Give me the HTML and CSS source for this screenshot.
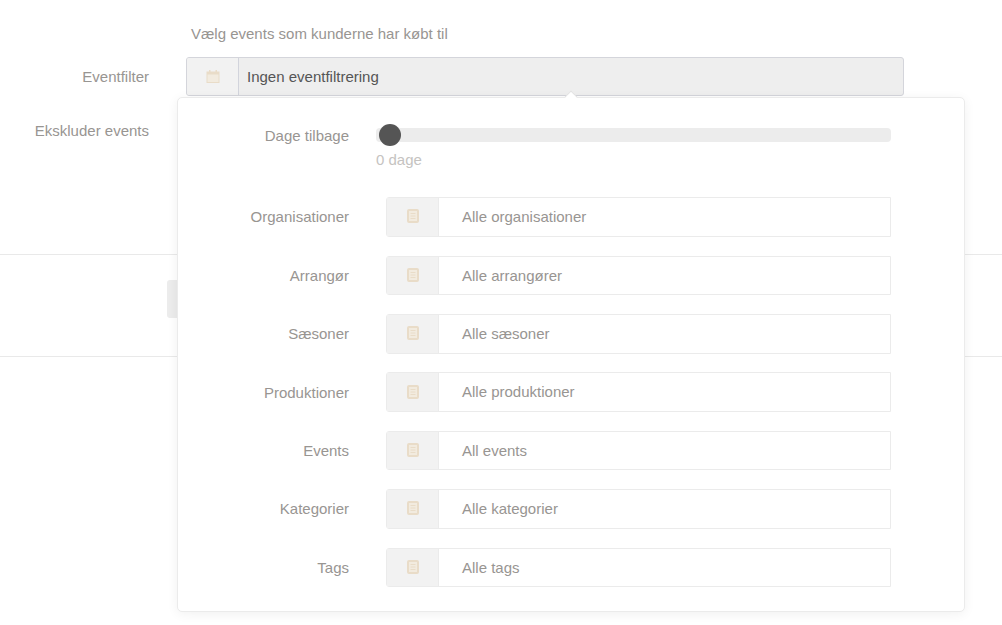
FILE: index.html
```html
<!DOCTYPE html>
<html lang="da">
<head>
<meta charset="utf-8">
<title>Eventfilter</title>
<link rel="stylesheet" href="styles.css">
</head>
<body>
<main class="page">
  <section class="form">
    <p class="hint">Vælg events som kunderne har købt til</p>
    <div class="form-row">
      <span class="form-label">Eventfilter</span>
      <div class="picker">
        <span class="picker-addon">
          <svg class="icon" width="14" height="13" viewBox="0 0 14 13"><path d="M3 0h1.500v1.500h5V0H11v1.500h2.500V13H.5V1.500H3z" fill="#e9dcc8"/><rect x="1.500" y="4.500" width="11" height="7.500" fill="#f2ebdf"/></svg>
        </span>
        <span class="picker-value">Ingen eventfiltrering</span>
      </div>
    </div>
    <div class="form-row form-row-plain">
      <span class="form-label">Ekskluder events</span>
    </div>
  </section>
  <section class="actions"><span class="action-button"></span></section>

  <div class="popover">
    <span class="popover-arrow"></span>
    <div class="slider-row">
      <span class="field-label">Dage tilbage</span>
      <div class="slider">
        <div class="slider-track"><span class="slider-thumb"></span></div>
        <span class="slider-value">0 dage</span>
      </div>
    </div>
    <div class="fields">
      <div class="field"><span class="field-label">Organisationer</span><div class="select"><span class="select-addon"><svg class="icon" width="12" height="14" viewBox="0 0 12 14"><use href="#doc"/></svg></span><span class="select-text">Alle organisationer</span></div></div>
      <div class="field"><span class="field-label">Arrangør</span><div class="select"><span class="select-addon"><svg class="icon" width="12" height="14" viewBox="0 0 12 14"><use href="#doc"/></svg></span><span class="select-text">Alle arrangører</span></div></div>
      <div class="field"><span class="field-label">Sæsoner</span><div class="select"><span class="select-addon"><svg class="icon" width="12" height="14" viewBox="0 0 12 14"><use href="#doc"/></svg></span><span class="select-text">Alle sæsoner</span></div></div>
      <div class="field"><span class="field-label">Produktioner</span><div class="select"><span class="select-addon"><svg class="icon" width="12" height="14" viewBox="0 0 12 14"><use href="#doc"/></svg></span><span class="select-text">Alle produktioner</span></div></div>
      <div class="field"><span class="field-label">Events</span><div class="select"><span class="select-addon"><svg class="icon" width="12" height="14" viewBox="0 0 12 14"><use href="#doc"/></svg></span><span class="select-text">All events</span></div></div>
      <div class="field"><span class="field-label">Kategorier</span><div class="select"><span class="select-addon"><svg class="icon" width="12" height="14" viewBox="0 0 12 14"><use href="#doc"/></svg></span><span class="select-text">Alle kategorier</span></div></div>
      <div class="field"><span class="field-label">Tags</span><div class="select"><span class="select-addon"><svg class="icon" width="12" height="14" viewBox="0 0 12 14"><use href="#doc"/></svg></span><span class="select-text">Alle tags</span></div></div>
    </div>
  </div>
</main>
<svg class="defs" width="0" height="0" aria-hidden="true">
  <symbol id="doc" viewBox="0 0 12 14"><rect x="1" y="1" width="10" height="12" rx="1" fill="#f2ebdf" stroke="#e9dcc8" stroke-width="2"/><path d="M3.500 4.500h5M3.500 7h5M3.500 9.500h5" stroke="#e9dcc8" stroke-width="1"/></symbol>
</svg>
</body>
</html>
```
FILE: styles.css
```css
* { box-sizing: border-box; }
html, body { margin: 0; height: 100%; overflow: hidden; background: #fff; }
body { font-family: "Liberation Sans", Arial, sans-serif; font-size: 15px; color: #989592; }
.page { position: relative; width: 1002px; height: 625px; overflow: hidden; }

.form { height: 255px; padding-top: 25px; border-bottom: 1px solid #e9e9e9; }
.hint { margin: 0 0 15px 191px; height: 17px; line-height: 17px; }
.form-row { display: flex; align-items: center; }
.form-row-plain { margin-top: 14px; height: 40px; align-items: flex-start; padding-top: 12px; }
.form-label { width: 149px; text-align: right; line-height: 17px; flex: none; }
.picker { display: flex; width: 718px; height: 39px; margin-left: 37px; background: #eee; border: 1px solid #d4d5db; border-radius: 3px; overflow: hidden; }
.picker-addon { display: flex; width: 52px; align-items: center; justify-content: center; background: #f2f2f2; border-right: 1px solid #d2d4dc; flex: none; }
.picker-value { padding-left: 8px; line-height: 37px; color: #555; }

.actions { height: 102px; padding: 25px 0 0 167px; border-bottom: 1px solid #e9e9e9; }
.action-button { display: block; width: 60px; height: 38px; border-radius: 3px; background: #ececec; }

.popover { position: absolute; left: 177px; top: 97px; width: 788px; height: 515px; padding: 18px 73px 0 0; background: #fff; border: 1px solid #ebebeb; border-radius: 5px; box-shadow: 0 2px 12px rgba(0,0,0,.06); }
.popover-arrow { position: absolute; left: 387px; top: -7px; width: 12px; height: 12px; background: #fff; border-left: 1px solid #dcdcdc; border-top: 1px solid #dcdcdc; transform: rotate(45deg) scale(.75); }

.slider-row { display: flex; }
.field-label { width: 171px; text-align: right; line-height: 39px; flex: none; }
.slider-row .field-label { line-height: 40px; }
.slider { margin-left: 27px; flex: 1; }
.slider-track { position: relative; height: 14px; margin: 12px 0 0 0; background: #ececec; border-radius: 4px; }
.slider-thumb { position: absolute; left: 3px; top: -4px; width: 22px; height: 22px; border-radius: 50%; background: #555; }
.slider-value { display: block; margin: 9px 0 0 0; height: 17px; line-height: 17px; color: #c5c3c1; }

.fields { display: flex; flex-direction: column; gap: 18.800px; margin-top: 29.200px; }
.field { display: flex; align-items: center; height: 39.600px; }
.select { display: flex; flex: 1; height: 39.600px; margin-left: 37px; background: #fff; border: 1px solid #ebebeb; border-radius: 3px 0 0 3px; }
.select-addon { display: flex; width: 52px; padding-bottom: 1px; align-items: center; justify-content: center; background: #f2f2f2; border-right: 1px solid #ebebeb; flex: none; }
.select-text { padding-left: 23px; line-height: 37px; }
.icon { display: block; }
.defs { position: absolute; }
```
